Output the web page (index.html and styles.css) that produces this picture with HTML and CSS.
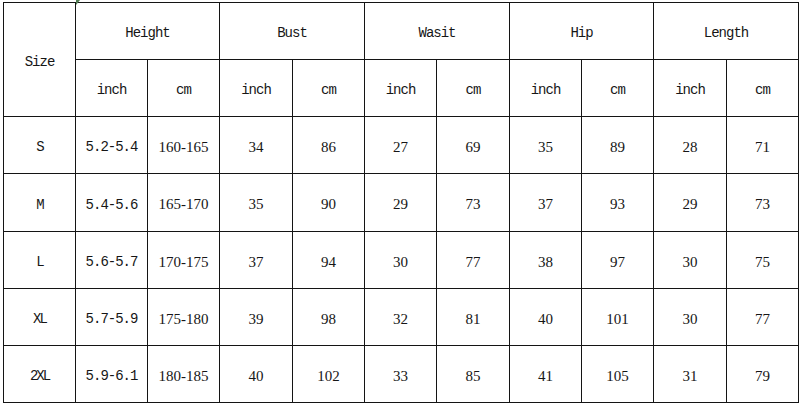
FILE: index.html
```html
<!DOCTYPE html>
<html lang="en">
<head>
<meta charset="utf-8">
<title>Size chart</title>
<link rel="stylesheet" href="styles.css">
</head>
<body>
<div class="sheet">
  <div class="chart">
    <div class="cell size-head">Size</div>
    <div class="cell group">Height</div>
    <div class="cell group">Bust</div>
    <div class="cell group">Wasit</div>
    <div class="cell group">Hip</div>
    <div class="cell group">Length</div>

    <div class="cell">inch</div><div class="cell">cm</div>
    <div class="cell">inch</div><div class="cell">cm</div>
    <div class="cell">inch</div><div class="cell">cm</div>
    <div class="cell">inch</div><div class="cell">cm</div>
    <div class="cell">inch</div><div class="cell">cm</div>

    <div class="cell sz">S</div><div class="cell">5.2-5.4</div><div class="cell num">160-165</div>
    <div class="cell num">34</div><div class="cell num">86</div>
    <div class="cell num">27</div><div class="cell num">69</div>
    <div class="cell num">35</div><div class="cell num">89</div>
    <div class="cell num">28</div><div class="cell num">71</div>

    <div class="cell sz">M</div><div class="cell">5.4-5.6</div><div class="cell num">165-170</div>
    <div class="cell num">35</div><div class="cell num">90</div>
    <div class="cell num">29</div><div class="cell num">73</div>
    <div class="cell num">37</div><div class="cell num">93</div>
    <div class="cell num">29</div><div class="cell num">73</div>

    <div class="cell sz">L</div><div class="cell">5.6-5.7</div><div class="cell num">170-175</div>
    <div class="cell num">37</div><div class="cell num">94</div>
    <div class="cell num">30</div><div class="cell num">77</div>
    <div class="cell num">38</div><div class="cell num">97</div>
    <div class="cell num">30</div><div class="cell num">75</div>

    <div class="cell sz">XL</div><div class="cell">5.7-5.9</div><div class="cell num">175-180</div>
    <div class="cell num">39</div><div class="cell num">98</div>
    <div class="cell num">32</div><div class="cell num">81</div>
    <div class="cell num">40</div><div class="cell num">101</div>
    <div class="cell num">30</div><div class="cell num">77</div>

    <div class="cell sz">2XL</div><div class="cell">5.9-6.1</div><div class="cell num">180-185</div>
    <div class="cell num">40</div><div class="cell num">102</div>
    <div class="cell num">33</div><div class="cell num">85</div>
    <div class="cell num">41</div><div class="cell num">105</div>
    <div class="cell num">31</div><div class="cell num">79</div>
  </div>
  <span class="marker"></span>
</div>
</body>
</html>
```

FILE: styles.css
```css
html, body {
  margin: 0;
  padding: 0;
  background: #fff;
}

.sheet {
  position: relative;
  padding: 2px 0 0 3px;
  width: 800px;
  height: 404px;
  box-sizing: border-box;
  overflow: hidden;
}

.chart {
  display: grid;
  width: 796px;
  box-sizing: border-box;
  padding: 1px;
  gap: 1px;
  background: #141414;
  grid-template-columns: 71px 71px 71px 72px 71px 71px 72px 71px 71px 72px 71px;
  grid-template-rows: 56px 56px 56px 57px 56px 56px 56px;
}

.cell {
  background: #fff;
  display: flex;
  align-items: center;
  justify-content: center;
  padding-top: 4px;
  box-sizing: border-box;
  font-family: "Liberation Mono", "Courier New", monospace;
  font-size: 14px;
  letter-spacing: -1px;
  color: #161616;
  white-space: nowrap;
}

.size-head {
  grid-row: span 2;
}

.group {
  grid-column: span 2;
}

.sz {
  letter-spacing: -2px;
}

.num {
  font-family: "Liberation Serif", "Times New Roman", serif;
  font-size: 15px;
  letter-spacing: 0;
  padding-left: 0;
}

.marker {
  position: absolute;
  left: 76px;
  top: 0;
  width: 0;
  height: 0;
  border-top: 5px solid #4f7a4f;
  border-right: 4px solid transparent;
}
```
